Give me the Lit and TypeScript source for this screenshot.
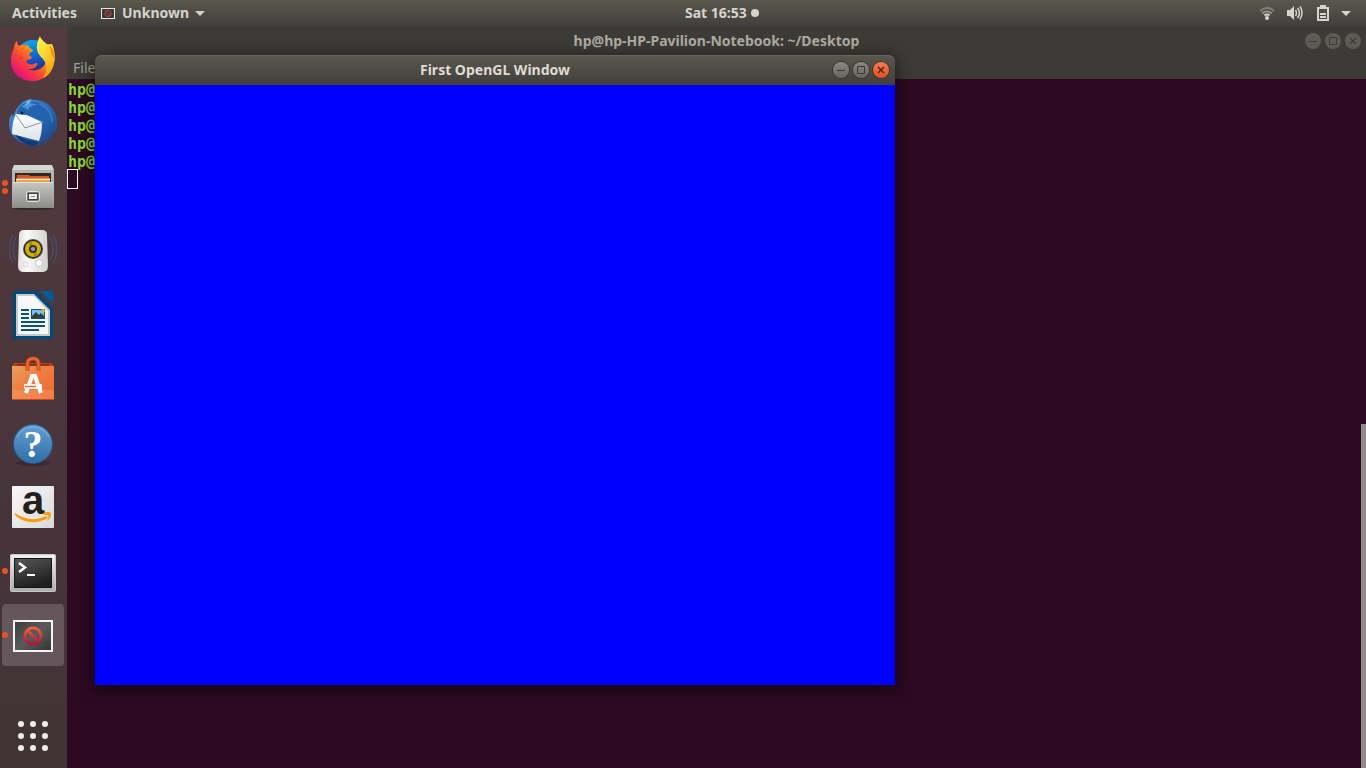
import { LitElement, html, css, svg } from "lit";
import { customElement } from "lit/decorators.js";

const firefox = svg`
  <defs>
    <linearGradient id="ff-body" x1="0.9" y1="0.1" x2="0.15" y2="0.85">
      <stop offset="0" stop-color="#ffe226"/><stop offset="0.35" stop-color="#ff9a16"/>
      <stop offset="0.65" stop-color="#ff4534"/><stop offset="1" stop-color="#e3117e"/>
    </linearGradient>
    <linearGradient id="ff-globe" x1="0.4" y1="0" x2="0.6" y2="1">
      <stop offset="0" stop-color="#00a9f5"/><stop offset="0.5" stop-color="#0b63d6"/><stop offset="1" stop-color="#2b1d80"/>
    </linearGradient>
    <linearGradient id="ff-tail" x1="0.2" y1="0" x2="0.6" y2="1">
      <stop offset="0" stop-color="#fff44a"/><stop offset="0.5" stop-color="#ffd22a"/><stop offset="1" stop-color="#ff980e"/>
    </linearGradient>
  </defs>
  <circle cx="24" cy="22" r="17" fill="url(#ff-globe)"/>
  <path fill="url(#ff-body)" d="M8 6c0 3 1 4 2 5 4-2 8-1 10 0 0 3 4 3 4 5-2 1-4 2-4 4 1 1 3 2 3 3-2 2-5 1-6 4 2 2 5 3 8 2 3-2 4-1 3 1-2 4-6 5-9 4 5 3 14 1 17-5 3-6 0-15-6-19l13-1c2 4 4 12 2 19-3 11-11 18-21 18C10 46 2 37 2 26c0-7 2-11 3-13 0-3 1-5 3-7z"/>
  <path fill="url(#ff-tail)" d="M31 1c1 4 5 6 8 9 6 6 8 14 5 22-2 5-5 9-10 11 5-7 4-14 0-19-4-4-7-8-6-14 0-4 2-6 3-9z"/>
  <path fill="#ff8a1a" d="M41 10c2 2 5 8 4 14-2-3-4-9-4-14z"/>`;

const thunderbird = svg`
  <defs>
    <linearGradient id="tb-body" x1="0" y1="0" x2="1" y2="1">
      <stop offset="0" stop-color="#4a9be0"/><stop offset="0.45" stop-color="#2b6fbd"/><stop offset="1" stop-color="#173f85"/>
    </linearGradient>
    <linearGradient id="tb-mail" x1="0" y1="0" x2="0" y2="1">
      <stop offset="0" stop-color="#ffffff"/><stop offset="1" stop-color="#dde3ea"/>
    </linearGradient>
  </defs>
  <path fill="url(#tb-body)" d="M14 3c3-3 8-3 13-2 13 1 21 11 21 22 0 6-2 10-3 12l-1-3-2 9-3-3-2 8-4-5-4 6-5-3-8 1C7 42 0 35 0 25c0-4 1-8 3-10l1 3c2-7 6-12 10-15z"/>
  <path fill="#123a78" d="M3 25c3 8 8 14 17 16l10 2-3 4C14 47 4 38 3 25z"/>
  <path fill="url(#tb-mail)" d="M7 15l6-1 20 9c0 8-1 14-3 19L3 35c0-8 1-14 4-20z"/>
  <path fill="none" stroke="#8e98a5" stroke-width="1" d="M7 16l9 13 18-6"/>
  <path fill="#2562ad" d="M8 15C9 7 16 2 26 3c9 2 15 9 15 19-3-4-6-4-9-1-5-2-9-5-14-5-4 0-7-1-10-1z"/>
  <path fill="#4a93d8" d="M12 8c4-4 11-5 16-2-5 0-8 2-9 5-2-2-5-3-7-3z"/>
  <path fill="#6fb8ee" d="M18 2l4-2-1 4-5 3z"/>
  <circle cx="13" cy="14" r="1.500" fill="#10243f"/>
  <path fill="none" stroke="#3a7cc2" stroke-width="1.500" d="M30 5c8 3 13 9 13 18"/>`;

const files = svg`
  <defs>
    <linearGradient id="fl-front" x1="0" y1="0" x2="0" y2="1">
      <stop offset="0" stop-color="#c4c4c2"/><stop offset="1" stop-color="#8b8b89"/>
    </linearGradient>
  </defs>
  <ellipse cx="24" cy="45" rx="21" ry="2" fill="#000" opacity="0.3"/>
  <path fill="#d6d6d4" d="M5 2h38l2 5v36H3V7z"/>
  <path fill="#b4b4b2" d="M3 7h42v37H3z"/>
  <path fill="#2c2926" d="M6 10h36v10H6z"/>
  <path fill="#d65a20" d="M8 12h12l1 1h19v6H7z"/>
  <path fill="#f58634" d="M8 15h33v4H7z"/>
  <path fill="#fff2dd" d="M7 16h34v1H7z"/>
  <path fill="#e8a34f" d="M7 17h34v2H7z"/>
  <path fill="url(#fl-front)" d="M4 20h40l1 25H3z"/>
  <path fill="#dededc" d="M4 19h40v1H4z"/>
  <rect x="17.500" y="28.500" width="13" height="10" rx="2" fill="#77777a" stroke="#e6e6e6"/>
  <rect x="19.500" y="30.500" width="9" height="6" fill="#ececec" stroke="#404040"/>
  <path stroke="#888" d="M22 33.500h4"/>`;

const rhythmbox = svg`
  <defs>
    <linearGradient id="rb-box" x1="0" y1="0" x2="1" y2="0">
      <stop offset="0" stop-color="#dcdcda"/><stop offset="0.3" stop-color="#fafafa"/><stop offset="1" stop-color="#d0d0ce"/>
    </linearGradient>
  </defs>
  <path fill="none" stroke="#4d6a9c" stroke-width="1.500" opacity="0.4" d="M7 10c-4 7-4 16 0 23M4 8c-5 8-5 20 0 28M41 10c4 7 4 16 0 23M44 8c5 8 5 20 0 28"/>
  <path fill="url(#rb-box)" d="M15 3h18q5 0 5 5l1 31q0 6-6 6H15q-6 0-6-6l1-31q0-5 5-5z"/>
  <circle cx="24" cy="22" r="10" fill="#4a4d52"/>
  <circle cx="24" cy="22" r="9" fill="#1c1c1c"/>
  <circle cx="24" cy="22" r="8" fill="#d2b000"/>
  <path fill="#a98f00" d="M24 22l-5-6 4-2zM24 22l5 6-4 2z"/>
  <circle cx="24" cy="22" r="4" fill="#33343b"/>
  <circle cx="24" cy="22" r="2" fill="#9ba4b5"/>
  <circle cx="30" cy="36" r="3.500" fill="#fff" stroke="#c4c4c2"/>
  <rect x="14.500" y="35.500" width="4" height="4" fill="none" stroke="#dadad8"/>`;

const writer = svg`
  <path fill="#00497c" d="M6 0h21l17 17v29q0 2-2 2H6q-2 0-2-2V2q0-2 2-2z"/>
  <path fill="#c9c9c9" d="M7 3h18l16 16v26H7z"/>
  <path fill="#f8f8f8" d="M9 5h16l14 15v23H9z"/>
  <path fill="#005c99" d="M31 0h12q1 0 1 1v12z"/>
  <path stroke="#0a5380" stroke-width="2" d="M12 19h8M12 23h8M12 27h8M12 31h24M12 35h24M12 39h18"/>
  <path fill="#0a5380" d="M22 18h14v10H22z"/>
  <path fill="#79c1ec" d="M23 19h12v8H23z"/>
  <circle cx="34" cy="20" r="2" fill="#d9b33b"/>
  <path fill="#303e45" d="M23 27v-2l4-4 3 3 2-2 3 3v2z"/>`;

const software = svg`
  <defs>
    <linearGradient id="sw-bag" x1="0" y1="0" x2="1" y2="1">
      <stop offset="0" stop-color="#e9a061"/><stop offset="0.5" stop-color="#f07a3c"/><stop offset="1" stop-color="#ee6a2c"/>
    </linearGradient>
  </defs>
  <path fill="#b73f14" d="M5 8h38l2 4H3z"/>
  <path fill="#8f300f" d="M8 9h32v2H8z"/>
  <path fill="url(#sw-bag)" d="M3 11h42v34H3z"/>
  <path fill="#fff" opacity="0.12" d="M3 35h42v9H3z"/>
  <path stroke="#c54d1c" d="M3 44.500h42"/>
  <path fill="none" stroke="#c64b1d" stroke-width="4" d="M18.500 16V9q0-5.500 5.500-5.500T29.500 9v7"/>
  <path fill="none" stroke="#f06a32" stroke-width="2" d="M18.500 16V9q0-5.500 5.500-5.500T29.500 9v7"/>
  <path fill="none" stroke="#fff" stroke-width="4" d="M17 38l6-17h3l6 17"/>
  <rect x="15" y="29" width="18" height="5" rx="1" fill="#fff"/>
  <path stroke="#ed6c30" stroke-width="1.500" d="M16 31.500h11"/>`;

const help = svg`
  <defs>
    <linearGradient id="hp-ball" x1="0" y1="0" x2="0" y2="1">
      <stop offset="0" stop-color="#65a0d2"/><stop offset="1" stop-color="#2e6da6"/>
    </linearGradient>
  </defs>
  <ellipse cx="24" cy="44" rx="17" ry="3" fill="#000" opacity="0.2"/>
  <circle cx="24" cy="25" r="19.500" fill="url(#hp-ball)" stroke="#255786"/>
  <path d="M8 18a18 18 0 0 1 32 0" fill="none" stroke="#8abbe2" opacity="0.7"/>
  <text class="help-mark" x="24" y="38" text-anchor="middle">?</text>`;

const amazon = svg`
  <defs>
    <linearGradient id="az-tile" x1="0" y1="0" x2="1" y2="1">
      <stop offset="0" stop-color="#f7f7f7"/><stop offset="1" stop-color="#d9d9d9"/>
    </linearGradient>
  </defs>
  <rect x="3" y="3" width="42" height="42" rx="1" fill="url(#az-tile)"/>
  <text class="amazon-mark" x="24" y="31" text-anchor="middle">a</text>
  <path fill="#ff9900" d="M6 30c10 7 21 8 31 3l2 2C29 41 15 41 6 32z"/>
  <path fill="#ff9900" d="M33 31c3-2 6-3 9-1 0 3-1 6-4 8 1-2 2-4 1-6-1 0-4 0-6-1z"/>`;

const terminalIcon = svg`
  <defs>
    <linearGradient id="tm-frame" x1="0" y1="0" x2="0" y2="1">
      <stop offset="0" stop-color="#f1f1f1"/><stop offset="1" stop-color="#acacac"/>
    </linearGradient>
    <linearGradient id="tm-screen" x1="0" y1="0" x2="0.4" y2="1">
      <stop offset="0" stop-color="#555"/><stop offset="0.5" stop-color="#3c3c3c"/><stop offset="1" stop-color="#202020"/>
    </linearGradient>
  </defs>
  <rect x="1.500" y="7.500" width="45" height="37" rx="1" fill="url(#tm-frame)" stroke="#c8c8c8"/>
  <rect x="5" y="11" width="38" height="30" fill="#151515"/>
  <rect x="6" y="12" width="36" height="28" fill="url(#tm-screen)"/>
  <path fill="none" stroke="#fff" stroke-width="2.500" d="M10 16l6 4.500-6 4.500"/>
  <path stroke="#fff" stroke-width="2" d="M18 28h8"/>`;

const unknownIcon = svg`
  <defs>
    <linearGradient id="un-screen" x1="0" y1="0" x2="1" y2="1">
      <stop offset="0" stop-color="#3c3c3c"/><stop offset="0.5" stop-color="#5a5a5a"/><stop offset="1" stop-color="#333"/>
    </linearGradient>
    <linearGradient id="un-sign" x1="0" y1="0" x2="0" y2="1">
      <stop offset="0" stop-color="#f0603c"/><stop offset="1" stop-color="#b01537"/>
    </linearGradient>
  </defs>
  <rect x="5" y="10" width="38" height="30" fill="url(#un-screen)" stroke="#f4f4f4" stroke-width="2"/>
  <path fill="none" stroke="url(#un-sign)" stroke-width="3" d="M24 17a8 8 0 1 0 .01 0zM18.500 19.500l11 11"/>`;

const apps = [
  { name: "Firefox", icon: firefox, running: 0 },
  { name: "Thunderbird Mail", icon: thunderbird, running: 0 },
  { name: "Files", icon: files, running: 2 },
  { name: "Rhythmbox", icon: rhythmbox, running: 0 },
  { name: "LibreOffice Writer", icon: writer, running: 0 },
  { name: "Ubuntu Software", icon: software, running: 0 },
  { name: "Help", icon: help, running: 0 },
  { name: "Amazon", icon: amazon, running: 0 },
  { name: "Terminal", icon: terminalIcon, running: 1 },
  { name: "Unknown", icon: unknownIcon, running: 1, active: true },
];

@customElement("window-controls")
class WindowControls extends LitElement {
  static styles = css`
    :host { display: flex; gap: 4px; }
    button {
      width: 16px; height: 16px; padding: 0; border: 0; border-radius: 50%;
      display: block; color: #3a3934;
      background: linear-gradient(#8a8880, #67655f);
      box-shadow: 0 0 0 1px #35342f;
    }
    svg { display: block; fill: none; stroke: currentColor; }
    .close { background: linear-gradient(#f97b52, #e4501f); color: #43200f; }
    :host([inactive]) button { background: #5c5b56; box-shadow: none; color: #3c3b37; }
  `;
  render() {
    return html`
      <button aria-label="Minimize"><svg width="16" height="16"><path d="M4 8.500h8"/></svg></button>
      <button aria-label="Maximize"><svg width="16" height="16"><path d="M4.500 4.500h7v7h-7z"/></svg></button>
      <button class="close" aria-label="Close"><svg width="16" height="16"><path stroke-width="1.300" d="M5 5l6 6M11 5l-6 6"/></svg></button>
    `;
  }
}

@customElement("top-bar")
class TopBar extends LitElement {
  static styles = css`
    :host {
      display: grid; grid-template-columns: 1fr 1fr; align-items: center;
      height: 27px; box-sizing: border-box; padding-bottom: 1px; color: #d6d3cb;
      background: linear-gradient(#5a574e, #403f3a);
    }
    button {
      display: flex; align-items: center; padding: 0; border: 0; background: none;
      color: inherit; font: inherit; line-height: 26px;
    }
    svg { display: block; }
    .left { display: flex; gap: 23px; padding-left: 12px; }
    .right { display: flex; justify-content: space-between; padding: 0 15px 0 2px; }
    .app { gap: 6px; }
    .clock { gap: 4px; }
    .status { gap: 12px; }
    .dot { width: 8px; height: 8px; border-radius: 50%; background: #d6d3cb; }
    .arrow { border: 5px solid transparent; border-top-color: #d6d3cb; border-bottom: 0; }
    .status .arrow { margin-left: -2px; }
  `;
  render() {
    return html`
      <div class="left">
        <button>Activities</button>
        <button class="app">
          <svg width="16" height="16">
            <rect x="1.500" y="3.500" width="13" height="10" fill="#3a3a3a" stroke="#e8e8e8"/>
            <path d="M8 5.500a3 3 0 1 0 .01 0zM6 6.500l4 4" fill="none" stroke="#d33a3a"/>
          </svg>
          Unknown
          <span class="arrow"></span>
        </button>
      </div>
      <div class="right">
        <button class="clock">Sat 16:53<span class="dot"></span></button>
        <button class="status" aria-label="System menu">
          <svg width="16" height="16" fill="none" stroke="#d6d3cb" stroke-width="2">
            <path opacity="0.35" d="M1 6q7-6 14 0"/>
            <path opacity="0.5" d="M3 8.500q5-4 10 0"/>
            <path d="M5.500 10.500q2.500-2 5 0"/>
            <circle cx="8" cy="13" r="2" fill="#d6d3cb" stroke="none"/>
          </svg>
          <svg width="16" height="16" fill="none" stroke="#d6d3cb" stroke-width="1.500">
            <path fill="#d6d3cb" stroke="none" d="M0 5h3l4-4v14l-4-4H0z"/>
            <path d="M8.500 5q2 3 0 6M10.500 3q4 5 0 10M13 1.500q4 6 0 13"/>
          </svg>
          <svg width="16" height="16" fill="#d6d3cb">
            <path fill-rule="evenodd" d="M5 0h6v2h3v14H2V2h3zM4 4v10h8V4z"/>
            <path d="M5 8h6v2H5zM5 11h6v2H5z"/>
          </svg>
          <span class="arrow"></span>
        </button>
      </div>
    `;
  }
}

@customElement("app-dock")
class AppDock extends LitElement {
  static styles = css`
    :host {
      display: flex; flex-direction: column; justify-content: space-between;
      width: 67px; box-sizing: border-box; padding: 1px 3px 1px 2px;
      background: linear-gradient(#533b40, #47343a 65%, #403436);
    }
    nav { display: flex; flex-direction: column; gap: 2px; }
    button {
      position: relative; display: grid; place-items: center;
      width: 62px; height: 62px; padding: 0; border: 0; border-radius: 4px; background: none;
    }
    .active { background: #65565b; }
    .marks { position: absolute; left: 0; top: 0; bottom: 0; display: grid; align-content: center; gap: 2px; }
    .mark { width: 6px; height: 6px; border-radius: 50%; background: #e95420; }
    svg { display: block; }
    .help-mark { font: 700 38px "Liberation Serif", serif; fill: #fff; }
    .amazon-mark { font: 700 40px "Liberation Sans", sans-serif; fill: #221f1f; }
  `;
  render() {
    return html`
      <nav>
        ${apps.map(
          (app) => html`
            <button class=${app.active ? "active" : ""} aria-label=${app.name}>
              <span class="marks">${Array.from({ length: app.running }, () => html`<span class="mark"></span>`)}</span>
              <svg width="48" height="48" viewBox="0 0 48 48">${app.icon}</svg>
            </button>`
        )}
      </nav>
      <button aria-label="Show Applications">
        <svg width="48" height="48" fill="#eeeeec">
          ${[12, 24, 36].map((y) => [12, 24, 36].map((x) => svg`<circle cx=${x} cy=${y} r="3"/>`))}
        </svg>
      </button>
    `;
  }
}

@customElement("terminal-window")
class TerminalWindow extends LitElement {
  static styles = css`
    :host { display: flex; flex-direction: column; min-width: 0; background: #2d0922; }
    header {
      display: grid; grid-template-columns: 1fr auto 1fr; align-items: center;
      height: 28px; padding: 0 5px; background: #3c3b37; color: #aeaba2;
    }
    window-controls { justify-self: end; }
    .menu { display: flex; height: 24px; background: #3c3b37; }
    .menu button {
      padding: 0 6px; border: 0; background: none; color: #a3a198;
      font: 400 14px/26px "Noto Sans", sans-serif;
    }
    .screen { flex: 1; display: flex; justify-content: space-between; }
    .lines { padding: 2px 0 0 1px; font: 700 15px/18px "DejaVu Sans Mono", monospace; color: #87d92f; }
    .cursor { width: 11px; height: 20px; margin: -2px 0 0 -1px; box-sizing: border-box; border: 1px solid #fff; }
    .scroll { align-self: end; width: 5px; height: 50%; background: #918b8e; }
  `;
  render() {
    return html`
      <header><span></span><span>hp@hp-HP-Pavilion-Notebook: ~/Desktop</span><window-controls inactive></window-controls></header>
      <div class="menu"><button>File</button></div>
      <div class="screen">
        <div class="lines">
          ${Array.from({ length: 5 }, () => html`<div>hp@</div>`)}
          <div class="cursor"></div>
        </div>
        <div class="scroll"></div>
      </div>
    `;
  }
}

@customElement("gl-window")
class GlWindow extends LitElement {
  static styles = css`
    :host {
      display: block; border-radius: 7px 7px 0 0;
      box-shadow: 0 3px 16px 2px rgba(0, 0, 0, 0.5);
    }
    header {
      display: grid; grid-template-columns: 1fr auto 1fr; align-items: center;
      height: 30px; padding: 0 6px; box-sizing: border-box; border-radius: 7px 7px 0 0;
      box-shadow: inset 0 1px #68665c; color: #dfdbd2;
      background: linear-gradient(#5a574e, #403f3a);
    }
    window-controls { justify-self: end; }
    canvas { display: block; width: 100%; background: #0000ff; }
  `;
  render() {
    return html`
      <header><span></span><span>First OpenGL Window</span><window-controls></window-controls></header>
      <canvas width="800" height="600"></canvas>
    `;
  }
}

@customElement("app-root")
class AppRoot extends LitElement {
  static styles = css`
    :host {
      position: relative; display: grid; grid-template: auto 1fr / auto 1fr;
      height: 100vh; overflow: hidden;
      font: 700 14px/20px "Noto Sans", sans-serif;
    }
    top-bar { grid-column: 1 / -1; }
    gl-window { position: absolute; left: 95px; top: 55px; width: 800px; }
  `;
  render() {
    return html`
      <top-bar></top-bar>
      <app-dock></app-dock>
      <terminal-window></terminal-window>
      <gl-window></gl-window>
    `;
  }
}
